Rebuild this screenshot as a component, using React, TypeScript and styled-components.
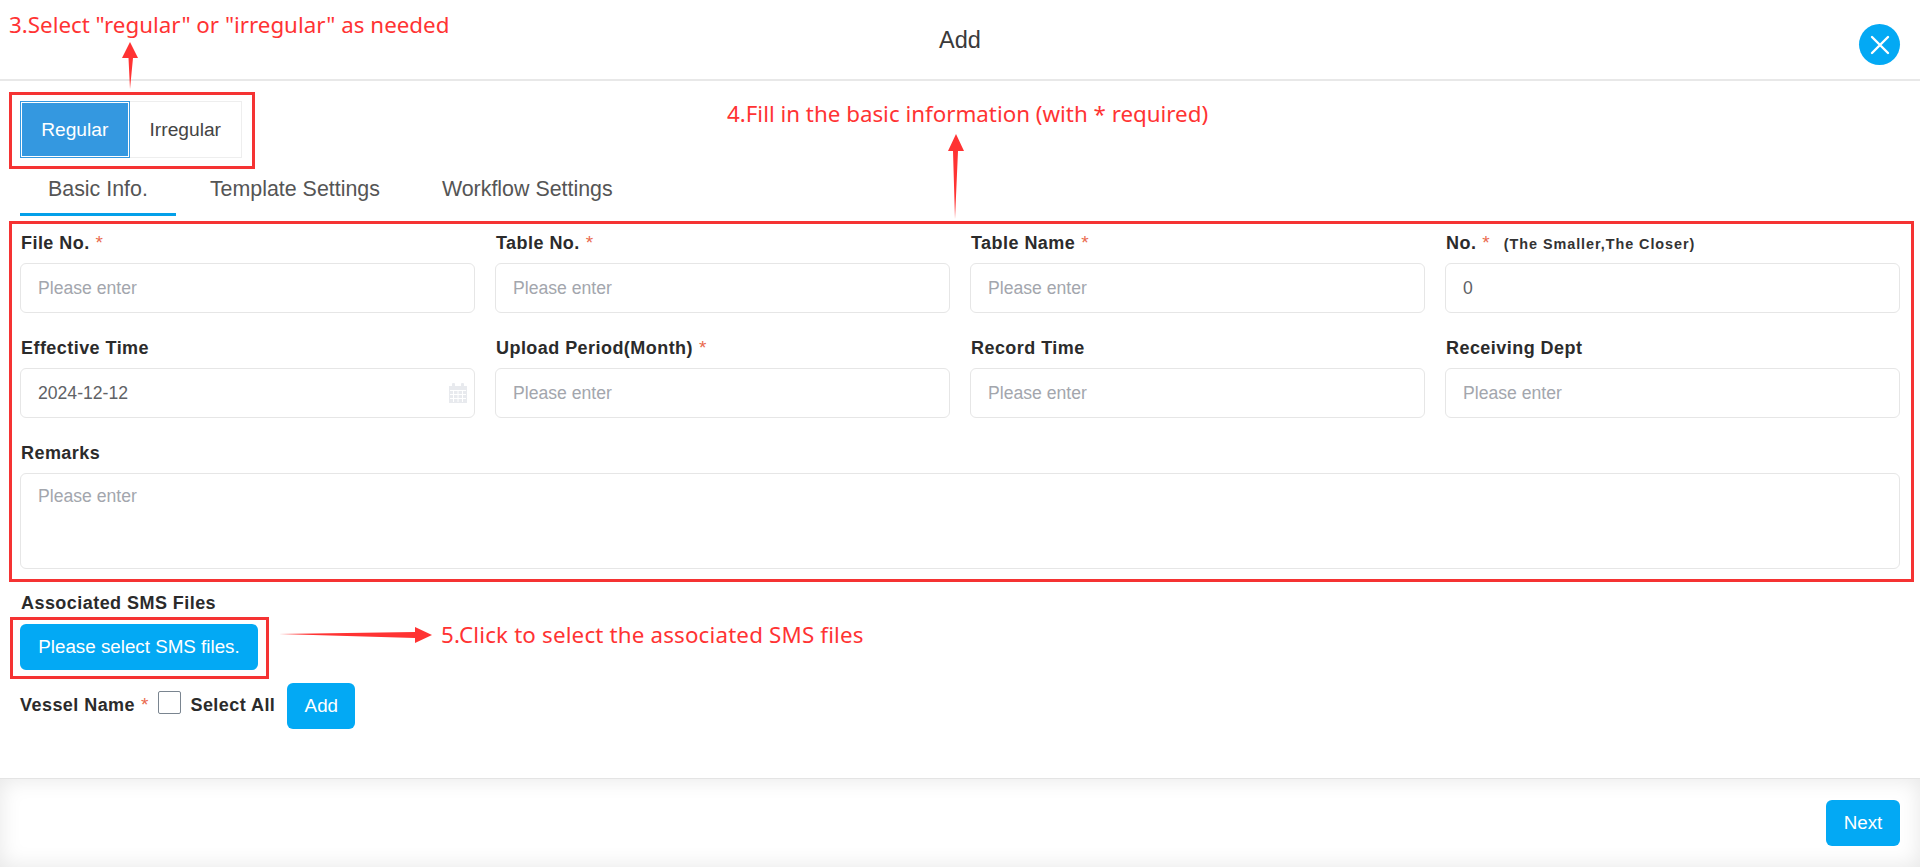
import React from 'react';
import styled, { createGlobalStyle } from 'styled-components';

const GlobalStyle = createGlobalStyle`
  html, body {
    margin: 0;
    padding: 0;
    background: #fff;
  }
  * {
    box-sizing: border-box;
  }
`;

const Page = styled.div`
  position: relative;
  width: 1920px;
  height: 867px;
  display: flex;
  flex-direction: column;
  overflow: hidden;
  background: #fff;
  font-family: 'Liberation Sans', Arial, sans-serif;
`;

const Header = styled.header`
  position: relative;
  height: 81px;
  flex: none;
  display: flex;
  align-items: flex-start;
  justify-content: center;
  border-bottom: 2px solid #e8e8e8;
`;

const Title = styled.h1`
  margin: 25px 0 0;
  font-size: 23.5px;
  line-height: 30px;
  font-weight: 400;
  color: #3a3a3a;
`;

const CloseButton = styled.button`
  position: absolute;
  right: 20px;
  top: 24px;
  width: 41px;
  height: 41px;
  padding: 0;
  border: 0;
  border-radius: 50%;
  background: #03a9f4;
  display: flex;
  align-items: center;
  justify-content: center;
`;

const Main = styled.main`
  flex: 1;
  padding: 20px 20px 0;
`;

const Segments = styled.div`
  display: inline-flex;
  height: 57px;
  width: 222px;
  border: 1px solid #eee;
  vertical-align: top;
`;

const Segment = styled.button<{ $active?: boolean }>`
  width: ${({ $active }) => ($active ? '110px' : '112px')};
  height: ${({ $active }) => ($active ? '57px' : '55px')};
  margin: ${({ $active }) => ($active ? '-1px 0 -1px -1px' : '0')};
  padding: 0;
  font: 400 19.2px 'Liberation Sans', Arial, sans-serif;
  color: ${({ $active }) => ($active ? '#fff' : '#444')};
  background: ${({ $active }) => ($active ? '#3498e0' : '#fff')};
  border: ${({ $active }) => ($active ? '1px solid #3498e0' : '0')};
  box-shadow: ${({ $active }) => ($active ? 'inset 0 0 0 1px #fff' : 'none')};
`;

const Tabs = styled.nav`
  display: flex;
  height: 58px;
`;

const Tab = styled.div<{ $active?: boolean }>`
  padding: 0 28px;
  margin-right: 6px;
  height: 58px;
  line-height: 62px;
  font-size: 21.4px;
  color: #555;
  border-bottom: 3px solid ${({ $active }) => ($active ? '#03a0e9' : 'transparent')};
`;

const FormGrid = styled.div`
  display: grid;
  grid-template-columns: repeat(4, 455px);
  column-gap: 20px;
  row-gap: 21px;
  padding-top: 13px;
`;

const Field = styled.div<{ $full?: boolean }>`
  grid-column: ${({ $full }) => ($full ? '1 / -1' : 'auto')};
  position: relative;
`;

const Label = styled.label`
  display: block;
  height: 26px;
  line-height: 28px;
  margin-bottom: 8px;
  padding-left: 1px;
  font-size: 18px;
  font-weight: 700;
  letter-spacing: 0.45px;
  color: #2b2b2b;
  white-space: nowrap;
`;

const SectionLabel = styled(Label)`
  line-height: 26px;
`;

const Req = styled.span`
  color: #ea6a4e;
  font-size: 19px;
  font-weight: 400;
  letter-spacing: 0;
  margin-left: 6px;
`;

const Hint = styled.span`
  margin-left: 14px;
  font-size: 14.4px;
  letter-spacing: 0.95px;
  color: #333;
`;

const Input = styled.input`
  display: block;
  width: 100%;
  height: 50px;
  padding: 0 17px;
  font: 400 17.6px 'Liberation Sans', Arial, sans-serif;
  color: #606266;
  background: #fff;
  border: 1px solid #e6e6e6;
  border-radius: 6px;
  outline: none;

  &::placeholder {
    color: #a3a6ad;
    opacity: 1;
  }
`;

const TextArea = styled.textarea`
  display: block;
  width: 100%;
  height: 96px;
  padding: 12px 17px;
  font: 400 17.6px 'Liberation Sans', Arial, sans-serif;
  color: #606266;
  background: #fff;
  border: 1px solid #e6e6e6;
  border-radius: 6px;
  outline: none;
  resize: none;

  &::placeholder {
    color: #a3a6ad;
    opacity: 1;
  }
`;

const CalendarIcon = styled.svg`
  position: absolute;
  right: 8px;
  bottom: 15px;
  width: 18px;
  height: 20px;
`;

const SmsSection = styled.section`
  margin-top: 21px;
`;

const PrimaryButton = styled.button<{ $width: number }>`
  height: 46px;
  width: ${({ $width }) => $width}px;
  padding: 0;
  font: 400 18.8px 'Liberation Sans', Arial, sans-serif;
  color: #fff;
  background: #03a9f4;
  border: 0;
  border-radius: 6px;
  white-space: nowrap;
`;

const VesselRow = styled.div`
  display: flex;
  align-items: flex-start;
  margin-top: 13px;
`;

const InlineLabel = styled.span`
  margin-top: 8px;
  height: 26px;
  line-height: 28px;
  font-size: 18px;
  font-weight: 700;
  letter-spacing: 0.45px;
  color: #2b2b2b;
  white-space: nowrap;
`;

const CheckBox = styled.span`
  width: 23px;
  height: 23px;
  margin: 8px 9px 0 10px;
  background: #fff;
  border: 1px solid #7a8590;
  border-radius: 2px;
`;

const AddWrap = styled.div`
  margin-left: 12px;
`;

const Footer = styled.footer`
  flex: none;
  height: 89px;
  display: flex;
  justify-content: flex-end;
  align-items: flex-start;
  padding: 21px 20px 0;
  border-top: 1px solid #e4e4e4;
  box-shadow: inset 0 0 22px rgba(0, 0, 0, 0.1);
`;

const Annotation = styled.div<{ $x: number; $y: number; $spacing?: number }>`
  position: absolute;
  left: ${({ $x }) => $x}px;
  top: ${({ $y }) => $y}px;
  font-family: 'Noto Sans', 'Open Sans', sans-serif;
  font-size: 22.35px;
  line-height: 30px;
  letter-spacing: ${({ $spacing }) => $spacing ?? 0}px;
  color: #ff3333;
  white-space: nowrap;
`;

const Frame = styled.div<{ $x: number; $y: number; $w: number; $h: number }>`
  position: absolute;
  left: ${({ $x }) => $x}px;
  top: ${({ $y }) => $y}px;
  width: ${({ $w }) => $w}px;
  height: ${({ $h }) => $h}px;
  border: 3px solid #f53333;
  pointer-events: none;
`;

const ArrowLayer = styled.svg`
  position: absolute;
  left: 0;
  top: 0;
  width: 1920px;
  height: 867px;
  pointer-events: none;
`;

const App: React.FC = () => (
  <Page>
    <GlobalStyle />
    <Header>
      <Title>Add</Title>
      <CloseButton aria-label="Close">
        <svg width="20" height="20" viewBox="0 0 20 20" fill="none" stroke="#fff" strokeWidth="2.4" strokeLinecap="round">
          <path d="M2 2 L18 18 M18 2 L2 18" />
        </svg>
      </CloseButton>
    </Header>
    <Main>
      <Segments>
        <Segment $active>Regular</Segment>
        <Segment>Irregular</Segment>
      </Segments>
      <Tabs>
        <Tab $active>Basic Info.</Tab>
        <Tab>Template Settings</Tab>
        <Tab>Workflow Settings</Tab>
      </Tabs>
      <FormGrid>
        <Field>
          <Label>File No.<Req>*</Req></Label>
          <Input placeholder="Please enter" />
        </Field>
        <Field>
          <Label>Table No.<Req>*</Req></Label>
          <Input placeholder="Please enter" />
        </Field>
        <Field>
          <Label>Table Name<Req>*</Req></Label>
          <Input placeholder="Please enter" />
        </Field>
        <Field>
          <Label>No.<Req>*</Req><Hint>(The Smaller,The Closer)</Hint></Label>
          <Input defaultValue="0" />
        </Field>
        <Field>
          <Label>Effective Time</Label>
          <Input defaultValue="2024-12-12" />
          <CalendarIcon viewBox="0 0 18 20">
            <path fill="#e8eaee" d="M0 3h3V1a1 1 0 0 1 1-1h1a1 1 0 0 1 1 1v2h6V1a1 1 0 0 1 1-1h1a1 1 0 0 1 1 1v2h3v17H0z" />
            <path stroke="#fff" strokeWidth="1" d="M1 7.5h16M1 11.5h16M1 15.5h16M4.5 7v12M9 7v12M13.5 7v12" />
          </CalendarIcon>
        </Field>
        <Field>
          <Label>Upload Period(Month)<Req>*</Req></Label>
          <Input placeholder="Please enter" />
        </Field>
        <Field>
          <Label>Record Time</Label>
          <Input placeholder="Please enter" />
        </Field>
        <Field>
          <Label>Receiving Dept</Label>
          <Input placeholder="Please enter" />
        </Field>
        <Field $full>
          <Label>Remarks</Label>
          <TextArea placeholder="Please enter" />
        </Field>
      </FormGrid>
      <SmsSection>
        <SectionLabel>Associated SMS Files</SectionLabel>
        <PrimaryButton $width={238}>Please select SMS files.</PrimaryButton>
      </SmsSection>
      <VesselRow>
        <InlineLabel>Vessel Name<Req>*</Req></InlineLabel>
        <CheckBox />
        <InlineLabel>Select All</InlineLabel>
        <AddWrap>
          <PrimaryButton $width={68}>Add</PrimaryButton>
        </AddWrap>
      </VesselRow>
    </Main>
    <Footer>
      <PrimaryButton $width={74}>Next</PrimaryButton>
    </Footer>

    <Annotation $x={9} $y={10}>3.Select "regular" or "irregular" as needed</Annotation>
    <Annotation $x={727} $y={99}>4.Fill in the basic information (with * required)</Annotation>
    <Annotation $x={441} $y={620} $spacing={0.17}>5.Click to select the associated SMS files</Annotation>
    <Frame $x={9} $y={92} $w={246} $h={77} />
    <Frame $x={9} $y={221} $w={1905} $h={361} />
    <Frame $x={10} $y={617} $w={259} $h={62} />
    <ArrowLayer viewBox="0 0 1920 867">
      <path fill="#ff3333" d="M130 42 L138 58 L133 58 L130 89 L128.5 58 L122 58 Z" />
      <path fill="#ff3333" d="M956 134 L964 151 L958 151 L955 219 L953 151 L948 151 Z" />
      <path fill="#ff3333" d="M279 634 L415 632 L415 627 L432 635 L415 643 L415 638 Z" />
    </ArrowLayer>
  </Page>
);

export default App;
